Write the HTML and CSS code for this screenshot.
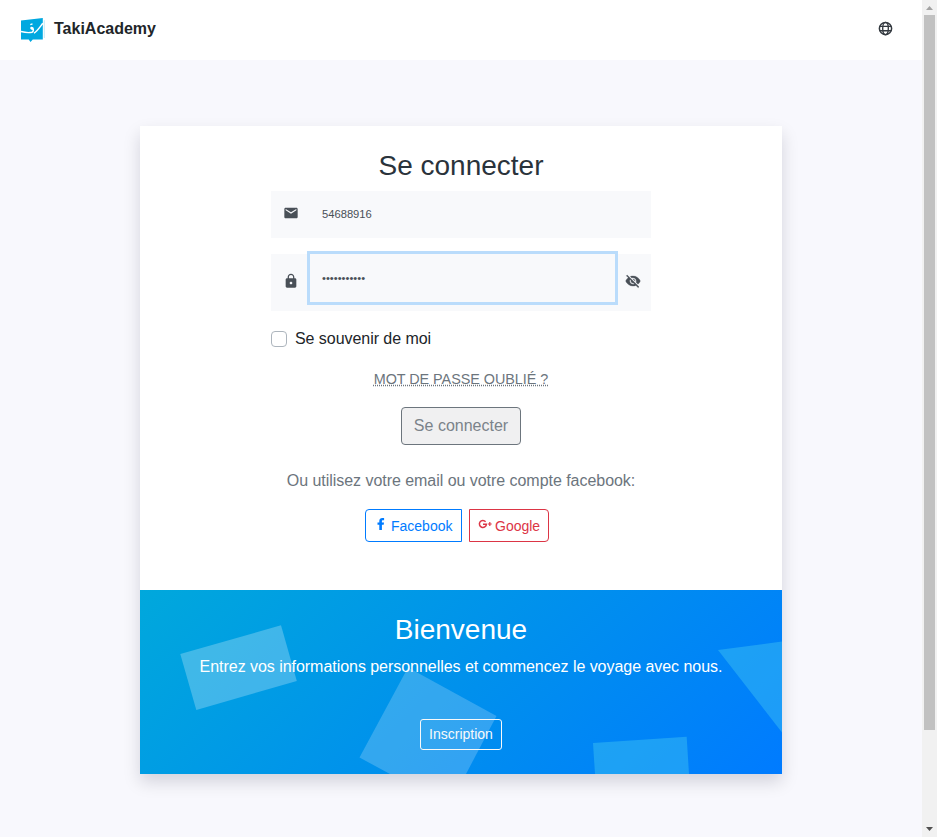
FILE: index.html
```html
<!DOCTYPE html>
<html lang="fr">
<head>
<meta charset="utf-8">
<title>TakiAcademy</title>
<link rel="stylesheet" href="styles.css">
</head>
<body>
<div class="view">
  <div class="page">
    <header class="topbar">
      <a class="brand">
        <svg class="logo" viewBox="0 0 26 26">
          <path d="M23.800 3.500l.9-.4V21h-.9z" fill="#b9e6f6"/>
          <path d="M1 3.500L22.800 1v21.500H12.800L10.500 25 8.700 22.500H1z" fill="#00a8e0"/>
          <path d="M1 14.500C4 15.300 9 16 12 15.200C13.600 14.500 13.700 12.500 12.700 10.800C11 9.800 9.700 11.700 12.900 12.300M14 16.200C17 14.500 19.500 10.500 22.800 6.300" fill="none" stroke="#fff" stroke-width="1.500"/>
          <path d="M10.300 7.700l2.200-.8" stroke="#fff" stroke-width="1.300"/>
        </svg>
        <span>TakiAcademy</span>
      </a>
      <svg class="globe" viewBox="0 0 24 24"><circle cx="12" cy="12" r="9.800" fill="none" stroke="currentColor" stroke-width="2.400"/><ellipse cx="12" cy="12" rx="4.500" ry="9.800" fill="none" stroke="currentColor" stroke-width="2.200"/><path d="M3 8.500h18M3 15.500h18" stroke="currentColor" stroke-width="2.200"/></svg>
    </header>
    <main class="card">
      <section class="login">
        <h3>Se connecter</h3>
        <form class="form">
          <div class="row row-email">
            <svg class="icon" viewBox="0 0 24 24"><path fill="currentColor" d="M20 4H4c-1.100 0-2 .9-2 2v12c0 1.100.9 2 2 2h16c1.100 0 2-.9 2-2V6c0-1.100-.9-2-2-2zm0 4l-8 5-8-5V6l8 5 8-5v2z"/></svg>
            <input type="text" value="54688916">
          </div>
          <div class="row row-password">
            <svg class="icon" viewBox="0 0 24 24"><path fill="currentColor" d="M18 8h-1V6c0-2.760-2.240-5-5-5S7 3.240 7 6v2H6c-1.100 0-2 .9-2 2v10c0 1.100.9 2 2 2h12c1.100 0 2-.9 2-2V10c0-1.100-.9-2-2-2zm-6 9c-1.100 0-2-.9-2-2s.9-2 2-2 2 .9 2 2-.9 2-2 2zm3.100-9H8.900V6c0-1.710 1.390-3.100 3.100-3.100s3.100 1.390 3.100 3.100v2z"/></svg>
            <input class="focused" type="password" value="motdepasse1">
            <svg class="icon eye" viewBox="0 0 24 24"><path fill="currentColor" stroke="currentColor" stroke-width=".5" d="M12 7c2.760 0 5 2.240 5 5 0 .65-.13 1.260-.36 1.830l2.920 2.920c1.510-1.260 2.700-2.890 3.430-4.750-1.730-4.390-6-7.500-11-7.500-1.400 0-2.740.25-3.980.7l2.160 2.160C10.740 7.130 11.350 7 12 7zM2 4.270l2.280 2.280.46.46C3.080 8.300 1.780 10.020 1 12c1.730 4.390 6 7.500 11 7.500 1.550 0 3.030-.3 4.380-.84l.42.42L19.730 22 21 20.730 3.270 3 2 4.270zM7.530 9.800l1.550 1.550c-.05.21-.08.43-.08.65 0 1.660 1.340 3 3 3 .22 0 .44-.03.65-.08l1.550 1.550c-.67.33-1.410.53-2.200.53-2.760 0-5-2.240-5-5 0-.79.2-1.530.53-2.200zm4.310-.78l3.150 3.150.02-.16c0-1.660-1.340-3-3-3l-.17.01z"/></svg>
          </div>
          <label class="remember"><span class="box"></span>Se souvenir de moi</label>
        </form>
        <a class="forgot">MOT DE PASSE OUBLIÉ ?</a>
        <button class="submit">Se connecter</button>
        <p class="alt">Ou utilisez votre email ou votre compte facebook:</p>
        <div class="social">
          <button class="facebook"><svg viewBox="0 0 14 14"><path fill="currentColor" d="M5.300 13V7.800H3.500V5.500h1.800V4c0-2 1.200-3 3-3h1.800v2.200H8.900c-.8 0-1 .4-1 1v1.300H10l-.3 2.300H7.900V13z"/></svg>Facebook</button>
          <button class="google"><svg viewBox="0 0 14 14"><path d="M7.600 4.700A3.500 3.500 0 1 0 8.400 7.300H5" fill="none" stroke="currentColor" stroke-width="1.500"/><path d="M9.900 7h3.800M11.800 5.100v3.800" stroke="currentColor" stroke-width="1.200"/></svg>Google</button>
        </div>
      </section>
      <section class="welcome">
        <svg class="shapes" viewBox="0 0 642 184" fill="#fff">
          <polygon points="40.300,64 141,35.300 156.800,91 56.300,120" opacity=".25"/>
          <polygon points="268,77.500 356.500,126 326,184 250,184 219.500,167.500" opacity=".2"/>
          <polygon class="cyan" points="578,60 642,51.500 642,142.500"/>
          <polygon class="cyan" points="453,153 546.700,146.700 549,184 455,184"/>
        </svg>
        <h3>Bienvenue</h3>
        <p>Entrez vos informations personnelles et commencez le voyage avec nous.</p>
        <button class="signup">Inscription</button>
      </section>
    </main>
  </div>
  <div class="scrollbar">
    <svg viewBox="0 0 15 15"><path d="M4 10h7L7.500 6z" fill="#a3a3a3"/></svg>
    <div class="thumb"></div>
    <svg viewBox="0 0 15 15"><path d="M4 5h7L7.500 9z" fill="#505050"/></svg>
  </div>
</div>
</body>
</html>
```
FILE: styles.css
```css
* { box-sizing: border-box; }
body { margin: 0; font: 16px/24px "Liberation Sans", Arial, sans-serif; color: #212529; overflow: hidden; }
h3, p { margin: 0; }
h3 { font-size: 28px; line-height: 34px; font-weight: 400; }
button { font-family: inherit; background: none; border: 1px solid; border-radius: 4px; margin: 0; }
svg { display: block; flex: none; }
.view { display: flex; height: 837px; }
.page { flex: 1; background: #f8f8fd; }
.topbar { height: 60px; background: #fff; padding: 0 30px 2px 20px; display: flex; align-items: center; justify-content: space-between; }
.brand { display: flex; align-items: center; gap: 8px; font-weight: 700; }
.logo { width: 26px; height: 26px; margin-top: 2px; }
.globe { width: 15px; height: 15px; color: #343a40; margin-right: -.5px; margin-bottom: 1px; }
.card { width: 642px; height: 648px; margin: 66px auto 0; background: #fff; box-shadow: 0 8px 16px rgba(0, 0, 35, .15); }
.login { height: 464px; padding-top: 23px; display: flex; flex-direction: column; align-items: center; color: #6c757d; }
.login h3 { color: #2a333b; }
.form { width: 380px; margin-top: 8px; }
.row { background: #f8f9fb; display: flex; color: #495057; padding-left: 12px; }
.row-email { height: 47px; margin-bottom: 16px; }
.row-password { height: 57px; }
.icon { width: 16px; height: 16px; margin-top: 14px; }
.row-password .icon { margin-top: 19px; }
.row .eye { margin-left: 10px; }
.row input { width: 305px; height: 48px; margin: 0 0 0 11px; padding: 0 12px; border: 0; outline: 0; background: transparent; color: #495057; font: 11.200px "Liberation Sans", Arial, sans-serif; }
.row-email input { height: 46px; }
.row .focused { box-shadow: 0 0 0 3px #badcfb; }
.remember { display: flex; align-items: center; gap: 8px; margin-top: 16px; color: #212529; letter-spacing: -.05px; }
.box { width: 16px; height: 16px; border: 1px solid #adb5bd; border-radius: 4px; }
.forgot { font-size: 14.400px; line-height: 18px; margin-top: 19px; letter-spacing: -.04px; text-decoration: underline dotted; }
.submit { width: 120px; height: 38px; margin-top: 19px; padding: 0; font-size: 16px; color: #7b838a; border-color: #6c757d; background: #f0f0f1; }
.alt { margin-top: 24px; letter-spacing: -.04px; }
.social { display: flex; gap: 7px; margin: 16px 8px 0 0; }
.social button { height: 33px; padding: 0 8px; display: flex; align-items: center; font-size: 14px; white-space: nowrap; }
.social svg { width: 14px; height: 14px; margin: -4px 3px 0 0; }
.social .facebook { width: 97px; color: #007bff; border-radius: 4px 0 0 4px; }
.social .google { width: 80px; color: #dc3545; border-radius: 0 4px 4px 0; }
.welcome { height: 184px; position: relative; background: linear-gradient(135deg, #00a8dc, #0091ec 50%, #007bff); color: #fff; padding-top: 23px; display: flex; flex-direction: column; align-items: center; }
.shapes { position: absolute; inset: 0; width: 642px; height: 184px; }
.cyan { fill: #54d8f0; opacity: .35; }
.welcome h3, .welcome p, .signup { position: relative; }
.welcome p { margin-top: 8px; letter-spacing: -.04px; }
.signup { width: 82px; height: 31px; margin-top: 40px; padding: 0 0 2px; font-size: 14px; color: #f8f9fa; border-radius: 3px; }
.scrollbar { width: 15px; background: #f1f1f1; display: flex; flex-direction: column; align-items: center; }
.scrollbar svg { width: 15px; height: 15px; }
.thumb { width: 11px; height: 715px; background: #c1c1c1; margin-bottom: auto; }
```
